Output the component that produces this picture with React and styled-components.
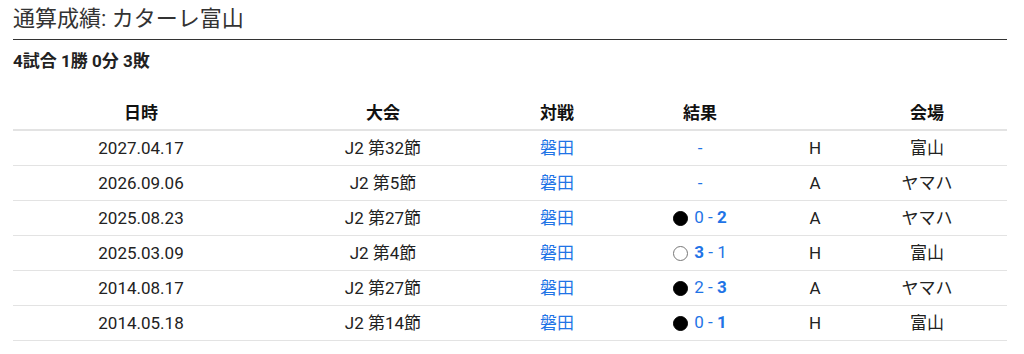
import React from "react";
import styled, { createGlobalStyle } from "styled-components";

const Global = createGlobalStyle`
  html, body { margin: 0; padding: 0; background: #fff; }
  body {
    font-family: Roboto, "Noto Sans CJK JP", "Noto Sans", sans-serif;
    color: #222;
  }
`;

const Page = styled.div`
  width: 994px;
  padding: 5px 0 0 13px;
`;

const Title = styled.h2`
  margin: 0;
  font-size: 22px;
  font-weight: 400;
  line-height: 28px;
  color: #333;
  padding-bottom: 6px;
  border-bottom: 1px solid #333;
`;

const Summary = styled.div`
  margin-top: 11px;
  font-size: 17px;
  font-weight: 700;
  line-height: 20px;
  color: #222;
`;

const Table = styled.table`
  margin-top: 22px;
  width: 994px;
  table-layout: fixed;
  border-collapse: collapse;
  font-size: 17px;
`;

const Th = styled.th`
  padding: 10px 0 6px;
  line-height: 20px;
  font-weight: 700;
  text-align: center;
  color: #111;
  border-bottom: 2px solid #e3e3e3;
`;

const Td = styled.td`
  height: 34px;
  padding: 0;
  line-height: 20px;
  text-align: center;
  color: #222;
  border-bottom: 1px solid #e3e3e3;
`;

const TeamLink = styled.a`
  color: #1f74e6;
  text-decoration: none;
`;

const Result = styled.span`
  display: inline-flex;
  align-items: center;
  gap: 6px;
  color: #1f74e6;
`;

const Mark = styled.span`
  display: inline-block;
  width: 15px;
  height: 15px;
  box-sizing: border-box;
  border-radius: 50%;
  margin-top: 3px;
  background: ${(p) => (p.$win ? "#fff" : "#000")};
  border: 1px solid ${(p) => (p.$win ? "#777" : "#000")};
`;

const Goal = styled.span`
  font-weight: ${(p) => (p.$bold ? 700 : 400)};
`;

const Dash = styled.span`
  color: #1f74e6;
`;

const cols = [256, 228, 120, 166, 64, 160];

const rows = [
  { date: "2027.04.17", comp: "J2 第32節", opp: "磐田", res: null, ha: "H", venue: "富山" },
  { date: "2026.09.06", comp: "J2 第5節", opp: "磐田", res: null, ha: "A", venue: "ヤマハ" },
  { date: "2025.08.23", comp: "J2 第27節", opp: "磐田", res: [0, 2], ha: "A", venue: "ヤマハ" },
  { date: "2025.03.09", comp: "J2 第4節", opp: "磐田", res: [3, 1], ha: "H", venue: "富山" },
  { date: "2014.08.17", comp: "J2 第27節", opp: "磐田", res: [2, 3], ha: "A", venue: "ヤマハ" },
  { date: "2014.05.18", comp: "J2 第14節", opp: "磐田", res: [0, 1], ha: "H", venue: "富山" },
];

function Score({ res }) {
  if (!res) return <Dash>-</Dash>;
  const [a, b] = res;
  const win = a > b;
  return (
    <Result>
      <Mark $win={win} />
      <span>
        <Goal $bold={a > b}>{a}</Goal> - <Goal $bold={b > a}>{b}</Goal>
      </span>
    </Result>
  );
}

export default function App() {
  return (
    <>
      <Global />
      <Page>
        <Title>通算成績: カターレ富山</Title>
        <Summary>4試合 1勝 0分 3敗</Summary>
        <Table>
          <colgroup>
            {cols.map((w, i) => (
              <col key={i} style={{ width: w }} />
            ))}
          </colgroup>
          <thead>
            <tr>
              <Th>日時</Th>
              <Th>大会</Th>
              <Th>対戦</Th>
              <Th>結果</Th>
              <Th></Th>
              <Th>会場</Th>
            </tr>
          </thead>
          <tbody>
            {rows.map((r) => (
              <tr key={r.date}>
                <Td>{r.date}</Td>
                <Td>{r.comp}</Td>
                <Td>
                  <TeamLink href="#">{r.opp}</TeamLink>
                </Td>
                <Td>
                  <Score res={r.res} />
                </Td>
                <Td>{r.ha}</Td>
                <Td>{r.venue}</Td>
              </tr>
            ))}
          </tbody>
        </Table>
      </Page>
    </>
  );
}
